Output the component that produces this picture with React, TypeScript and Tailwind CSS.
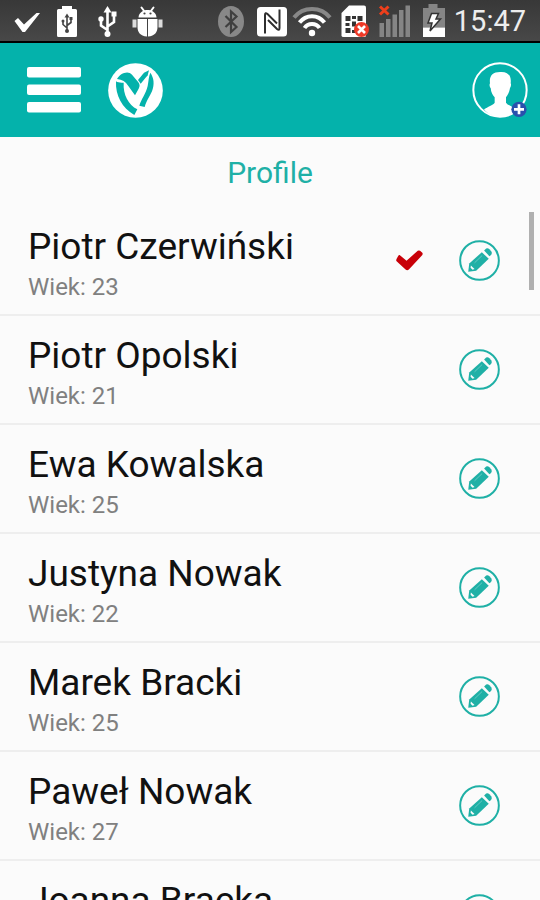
import React, { useState } from 'react';

interface Profile {
  id: number;
  name: string;
  age: number;
}

const profiles: Profile[] = [
  { id: 1, name: 'Piotr Czerwiński', age: 23 },
  { id: 2, name: 'Piotr Opolski', age: 21 },
  { id: 3, name: 'Ewa Kowalska', age: 25 },
  { id: 4, name: 'Justyna Nowak', age: 22 },
  { id: 5, name: 'Marek Bracki', age: 25 },
  { id: 6, name: 'Paweł Nowak', age: 27 },
  { id: 7, name: 'Joanna Bracka', age: 24 }
];

const StatusSlot: React.FC<{ children: React.ReactNode }> = ({ children }) => (
  <svg viewBox="0 0 40 43" className="h-[43px] w-10 shrink-0 overflow-visible" aria-hidden="true">
    {children}
  </svg>
);

const StatusBar: React.FC = () => (
  <div className="flex h-[43px] shrink-0 items-center justify-between border-b-2 border-black bg-gradient-to-b from-[#383838] to-[#484848] pr-3.5 pl-[7px]">
    <div className="flex">
      {/* Check */}
      <StatusSlot>
        <path d="M7.5 22 L11 19 L17 25.5 L29.5 14 L33 14 L18 33 L15.5 33Z" fill="#fff" />
      </StatusSlot>
      {/* USB battery */}
      <StatusSlot>
        <path d="M15 7h10v3h3.5q1.5 0 1.5 1.5V36.5q0 1.5-1.5 1.5h-17q-1.5 0-1.5-1.5V11.5q0-1.5 1.5-1.5H15Z" fill="#fff" />
        <path d="M20 17V32M20 29l-4-3.5V22M20 26.5l4-3V19.5" stroke="#444" strokeWidth="1.6" fill="none" />
        <path d="M17.5 18.5L20 14.5l2.5 4Z" fill="#444" />
        <circle cx="20" cy="32" r="2" fill="#444" />
        <circle cx="16" cy="22" r="1.5" fill="#444" />
        <rect x="22.5" y="18" width="3" height="3" fill="#444" />
      </StatusSlot>
      {/* USB */}
      <StatusSlot>
        <path d="M20.5 11V35M20.5 31L14 26.5V20M20.5 27.5L27 23V15" stroke="#fff" strokeWidth="2.6" fill="none" />
        <path d="M16.5 13.5L20.5 7l4 6.5Z" fill="#fff" />
        <circle cx="20.5" cy="35" r="3" fill="#fff" />
        <circle cx="14" cy="20" r="2.7" fill="#fff" />
        <rect x="24.5" y="12.5" width="5" height="5" fill="#fff" />
      </StatusSlot>
      {/* Debug bug */}
      <StatusSlot>
        <path d="M14.5 8.5l3 4M26.5 8.5l-3 4" stroke="#fff" strokeWidth="2" strokeLinecap="round" />
        <path d="M11.5 18.5C12 8.5 29 8.5 29.5 18.5Z" fill="#fff" />
        <circle cx="17.5" cy="14.5" r="1.1" fill="#444" />
        <circle cx="23.5" cy="14.5" r="1.1" fill="#444" />
        <path d="M10.5 20H20V37.5C13 37 10.5 33 10.5 28ZM21 20H30.5V28C30.5 33 28 37 21 37.5Z" fill="#fff" />
        <path d="M5.5 20.5h4v8h-4zM31.5 20.5h4v8h-4z" fill="#ddd" />
      </StatusSlot>
    </div>

    <div className="flex items-center">
      {/* Bluetooth */}
      <StatusSlot>
        <ellipse cx="21" cy="22.5" rx="13" ry="15.5" fill="#888" />
        <path d="M15.5 17L26.5 28L21 33V12.5L26.5 17.5L15.5 28" stroke="#3f3f3f" strokeWidth="2.2" fill="none" />
      </StatusSlot>
      {/* NFC */}
      <StatusSlot>
        <rect x="7" y="8" width="30" height="29.5" rx="3.5" fill="#fff" />
        <path d="M15 34.5V16Q15 13 17.5 15L27 24.5" fill="none" stroke="#2e2e2e" strokeWidth="2" />
        <path d="M29.5 10.5V29Q29.5 32 27 30L18 21" fill="none" stroke="#2e2e2e" strokeWidth="2" />
      </StatusSlot>
      {/* Wi-Fi */}
      <StatusSlot>
        <g transform="translate(1 1)" fill="none">
          <path d="M3 17.5C12 6 30 6 39 17.5" stroke="#888" strokeWidth="4" />
          <path d="M8.5 22.5C15 14 27 14 33.5 22.5" stroke="#fff" strokeWidth="4" />
          <path d="M13.5 28C17 22.5 25 22.5 28.5 28" stroke="#fff" strokeWidth="4" />
          <circle cx="21" cy="33" r="3.2" fill="#fff" />
        </g>
      </StatusSlot>
      {/* SIM error */}
      <StatusSlot>
        <g transform="translate(3 1)">
          <path d="M16 5.5H31q2 0 2 2V35.5q0 1.5-2 1.5H10.5q-2 0-2-1.5V13Z" fill="#fff" />
          <path d="M12.5 16h5v5h-5zM19 16h4v3h-4zM24.5 16h5v5h-5zM12.5 23h4v3h-4zM12.5 28h5v5h-5zM19 30h3v3h-3zM19 21.5h4v5h-4z" fill="#333" />
          <circle cx="28.5" cy="29.5" r="7.5" fill="#ee3a28" />
          <path d="M25 26l7 7M32 26l-7 7" stroke="#fff" strokeWidth="2.6" />
        </g>
      </StatusSlot>
      {/* Signal */}
      <StatusSlot>
        <g transform="translate(1 0)">
          <path d="M8.5 24h4.5v14H8.5zM15 20h4.5v18H15zM21.5 15.5H26v22.5h-4.5zM28 11h4.5v27H28zM34.5 6.5H39v31.5h-4.5z" fill="#858585" />
          <path d="M9 7.5l8.5 8M17.5 7.5l-8.5 8" stroke="#ee3f1c" strokeWidth="3" />
        </g>
      </StatusSlot>
      {/* Charging battery */}
      <StatusSlot>
        <path d="M18.5 5h9v4H35V28.5H13V9h5.5Z" fill="#858585" />
        <path d="M13 28.5H35v9.5H13Z" fill="#fff" />
        <path d="M21.5 14.5h7l-2.5 5.5h4.5L20 32l2-8h-4Z" fill="#fff" stroke="#333" strokeWidth="1.5" />
      </StatusSlot>
      <span className="ml-1 text-[29px] leading-9 text-[#ededed]">15:47</span>
    </div>
  </div>
);

const LogoIcon: React.FC = () => (
  <svg viewBox="324 53 165 165" className="size-[55px]" aria-hidden="true">
    <circle cx="406.5" cy="135.5" r="82" fill="#fff" />
    <g fill="#04b2ab">
      <path d="M348 108C346 150 366 188 403 209L412 192C385 178 369 148 371 112C362 113 354 112 348 108Z" />
      <path d="M351 101C360 84 384 74 396 88L415 111Q422 119 416 130L405 150L385 122Q374 103 351 101Z" />
      <path d="M414 104L432 82L447 75L443 90L422 115Z" />
      <path d="M451 82C462 98 464 116 456 138C448 155 440 165 434 185L418 181C423 163 438 145 443 122C446 105 446 94 451 82Z" />
    </g>
  </svg>
);

const AvatarIcon: React.FC = () => (
  <svg viewBox="65 52 168 168" className="size-14" aria-hidden="true">
    <circle cx="149" cy="136" r="80" fill="none" stroke="#fff" strokeWidth="6" />
    <path
      d="M149 82C172 80 184 92 181 116C183 118 182 126 179 130C177 144 171 152 167 158V174C172 182 186 184 198 196C178 222 122 224 101 194C112 186 128 182 133 174V158C128 152 122 144 121 130C117 126 117 118 119 116C116 94 127 82 149 82Z"
      fill="#fff"
    />
    <circle cx="206" cy="194" r="23" fill="#2a50ad" />
    <path d="M206 179v30M191 194h30" stroke="#fff" strokeWidth="8" />
  </svg>
);

const PencilIcon: React.FC = () => (
  <svg viewBox="236 118 124 124" className="size-[41px]" aria-hidden="true">
    <circle cx="298" cy="180" r="58.5" fill="none" stroke="#1fb0a6" strokeWidth="6" />
    <g fill="#1fb0a6">
      <path d="M264 214L267 189L305 155L326 175L288 211Z" />
      <path d="M312 150L318 144Q323 141 328 146L334 153Q337 158 333 163L328 167Z" />
    </g>
    <path d="M272 195L283 206L277 208L271 202Z" fill="#fbfbfb" />
    <path d="M283 187L306 165" stroke="#63c8c1" strokeWidth="3" />
  </svg>
);

const CheckIcon: React.FC = () => (
  <svg viewBox="45 149 82 63" className="h-[21px] w-[27px]" role="img" aria-label="Aktywny">
    <path
      d="M56 164L77 181L111 151Q114 149 118 151L125 157Q127 160 125 164L84 208Q79 212 74 208L46 182Q45 178 47 175L52 166Q54 163 56 164Z"
      fill="#c80008"
    />
  </svg>
);

export default function App() {
  const [activeId] = useState(1);

  return (
    <div className="flex h-screen flex-col overflow-hidden bg-[#fbfbfb] font-[Roboto,sans-serif]">
      <StatusBar />

      {/* Header */}
      <header className="flex h-[94px] shrink-0 items-center justify-between bg-[#04b2ab] pr-3 pl-[27px]">
        <div className="flex items-center gap-[27px]">
          <button type="button" aria-label="Menu">
            <svg viewBox="0 0 54 46" className="h-[46px] w-[54px]" aria-hidden="true">
              <rect width="54" height="10.5" rx="2" fill="#fff" />
              <rect y="17.5" width="54" height="10.5" rx="2" fill="#fff" />
              <rect y="35" width="54" height="10.5" rx="2" fill="#fff" />
            </svg>
          </button>
          <LogoIcon />
        </div>
        <button type="button" aria-label="Dodaj profil">
          <AvatarIcon />
        </button>
      </header>

      {/* Profile list */}
      <main className="relative flex min-h-0 flex-1 flex-col">
        <h1 className="shrink-0 pt-4 pb-3.5 text-center text-3xl leading-10 text-[#1fb0a6]">Profile</h1>
        <ul className="min-h-0 flex-1 overflow-hidden">
          {profiles.map((profile) => (
            <li
              key={profile.id}
              className="flex h-[109px] items-center gap-9 border-b-2 border-[#eeeeee] pr-10 pl-7"
            >
              <div className="min-w-0 flex-1 pt-1">
                <div className="text-[37px] leading-12 whitespace-nowrap text-[#111111]">{profile.name}</div>
                <div className="text-2xl leading-8 text-[#808080]">Wiek: {profile.age}</div>
              </div>
              {profile.id === activeId && <CheckIcon />}
              <button type="button" aria-label={`Edytuj: ${profile.name}`}>
                <PencilIcon />
              </button>
            </li>
          ))}
        </ul>
        {/* Scroll indicator */}
        <div className="absolute top-[75px] right-1.5 h-[78px] w-[5px] bg-[#b0b0b0]" />
      </main>
    </div>
  );
}
